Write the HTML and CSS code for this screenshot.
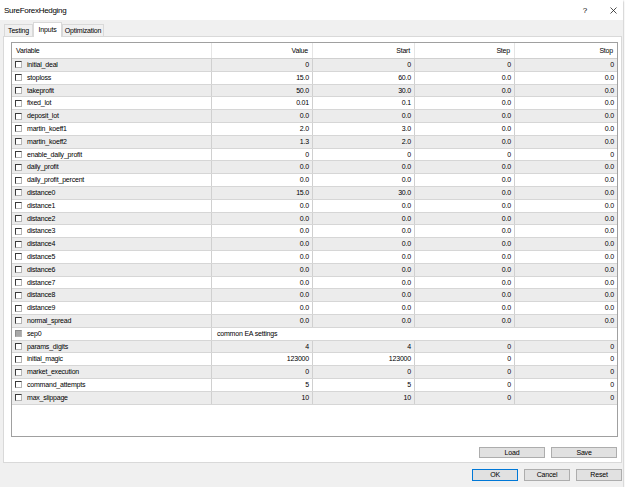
FILE: index.html
```html
<!DOCTYPE html>
<html>
<head>
    <meta charset="UTF-8">
    <title>SureForexHedging</title>
    <link rel="stylesheet" href="styles.css">
</head>
<body>
<div class="window">
    <div class="titlebar">
        <span class="title">SureForexHedging</span>
        <span class="help">?</span>
        <svg class="close" width="7" height="7" viewBox="0 0 7 7"><path d="M0.5 0.5 L6.5 6.5 M6.5 0.5 L0.5 6.5" stroke="#222" stroke-width="0.8" fill="none"/></svg>
    </div>

    <div class="tabs">
        <div class="tab tab-testing">Testing</div>
        <div class="tab tab-inputs active">Inputs</div>
        <div class="tab tab-opt">Optimization</div>
    </div>

    <div class="panel">
        <div class="list">
            <div class="head">
                <div class="var">Variable</div>
                <div>Value</div>
                <div>Start</div>
                <div>Step</div>
                <div>Stop</div>
            </div>
            <div class="rows">
                <div class="row"><div class="var"><span class="check"></span>initial_deal</div><div>0</div><div>0</div><div>0</div><div>0</div></div>
                <div class="row"><div class="var"><span class="check"></span>stoploss</div><div>15.0</div><div>60.0</div><div>0.0</div><div>0.0</div></div>
                <div class="row"><div class="var"><span class="check"></span>takeprofit</div><div>50.0</div><div>30.0</div><div>0.0</div><div>0.0</div></div>
                <div class="row"><div class="var"><span class="check"></span>fixed_lot</div><div>0.01</div><div>0.1</div><div>0.0</div><div>0.0</div></div>
                <div class="row"><div class="var"><span class="check"></span>deposit_lot</div><div>0.0</div><div>0.0</div><div>0.0</div><div>0.0</div></div>
                <div class="row"><div class="var"><span class="check"></span>martin_koeff1</div><div>2.0</div><div>3.0</div><div>0.0</div><div>0.0</div></div>
                <div class="row"><div class="var"><span class="check"></span>martin_koeff2</div><div>1.3</div><div>2.0</div><div>0.0</div><div>0.0</div></div>
                <div class="row"><div class="var"><span class="check"></span>enable_daily_profit</div><div>0</div><div>0</div><div>0</div><div>0</div></div>
                <div class="row"><div class="var"><span class="check"></span>daily_profit</div><div>0.0</div><div>0.0</div><div>0.0</div><div>0.0</div></div>
                <div class="row"><div class="var"><span class="check"></span>daily_profit_percent</div><div>0.0</div><div>0.0</div><div>0.0</div><div>0.0</div></div>
                <div class="row"><div class="var"><span class="check"></span>distance0</div><div>15.0</div><div>30.0</div><div>0.0</div><div>0.0</div></div>
                <div class="row"><div class="var"><span class="check"></span>distance1</div><div>0.0</div><div>0.0</div><div>0.0</div><div>0.0</div></div>
                <div class="row"><div class="var"><span class="check"></span>distance2</div><div>0.0</div><div>0.0</div><div>0.0</div><div>0.0</div></div>
                <div class="row"><div class="var"><span class="check"></span>distance3</div><div>0.0</div><div>0.0</div><div>0.0</div><div>0.0</div></div>
                <div class="row"><div class="var"><span class="check"></span>distance4</div><div>0.0</div><div>0.0</div><div>0.0</div><div>0.0</div></div>
                <div class="row"><div class="var"><span class="check"></span>distance5</div><div>0.0</div><div>0.0</div><div>0.0</div><div>0.0</div></div>
                <div class="row"><div class="var"><span class="check"></span>distance6</div><div>0.0</div><div>0.0</div><div>0.0</div><div>0.0</div></div>
                <div class="row"><div class="var"><span class="check"></span>distance7</div><div>0.0</div><div>0.0</div><div>0.0</div><div>0.0</div></div>
                <div class="row"><div class="var"><span class="check"></span>distance8</div><div>0.0</div><div>0.0</div><div>0.0</div><div>0.0</div></div>
                <div class="row"><div class="var"><span class="check"></span>distance9</div><div>0.0</div><div>0.0</div><div>0.0</div><div>0.0</div></div>
                <div class="row"><div class="var"><span class="check"></span>normal_spread</div><div>0.0</div><div>0.0</div><div>0.0</div><div>0.0</div></div>
                <div class="row"><div class="var"><span class="check grey"></span>sep0</div><div class="note">common EA settings</div></div>
                <div class="row"><div class="var"><span class="check"></span>params_digits</div><div>4</div><div>4</div><div>0</div><div>0</div></div>
                <div class="row"><div class="var"><span class="check"></span>initial_magic</div><div>123000</div><div>123000</div><div>0</div><div>0</div></div>
                <div class="row"><div class="var"><span class="check"></span>market_execution</div><div>0</div><div>0</div><div>0</div><div>0</div></div>
                <div class="row"><div class="var"><span class="check"></span>command_attempts</div><div>5</div><div>5</div><div>0</div><div>0</div></div>
                <div class="row"><div class="var"><span class="check"></span>max_slippage</div><div>10</div><div>10</div><div>0</div><div>0</div></div>
            </div>
        </div>
        <div class="actions">
            <div class="btn">Load</div>
            <div class="btn">Save</div>
        </div>
    </div>

    <div class="footer">
        <div class="btn small default">OK</div>
        <div class="btn small">Cancel</div>
        <div class="btn small">Reset</div>
    </div>
</div>
</body>
</html>
```

FILE: styles.css
```css
body {
    margin: 0;
    background-color: #fff;
    font-family: "Liberation Sans", Arial, sans-serif;
    font-size: 7px;
    letter-spacing: -0.2px;
    color: #000;
}

.window {
    width: 623px;
    height: 487px;
    background-color: #f0f0f0;
    box-shadow: 0 1px 2px rgba(0, 0, 0, 0.45);
    display: flex;
    flex-direction: column;
}

.titlebar {
    height: 20px;
    background-color: #fff;
    display: flex;
    align-items: center;
    padding: 0 6px 0 4px;
    font-size: 8px;
    letter-spacing: -0.3px;
}

.title {
    flex: 1;
}

.help {
    margin-right: 23px;
    font-size: 8px;
}

/* tabs */
.tabs {
    display: flex;
    align-items: flex-end;
    height: 16px;
    padding-left: 4px;
}

.tab {
    height: 12px;
    box-sizing: border-box;
    border: 1px solid #d9d9d9;
    border-bottom: none;
    background-color: #f0f0f0;
    text-align: center;
    line-height: 11px;
}

.tab-testing { width: 29px; }
.tab-inputs { width: 29px; }
.tab-opt { width: 42px; }

.tab.active {
    height: 15px;
    line-height: 13px;
    background-color: #fff;
    margin-bottom: -1px;
    position: relative;
    z-index: 1;
}

.panel {
    margin-left: 3px;
    width: 619px;
    height: 427px;
    box-sizing: border-box;
    border: 1px solid #d9d9d9;
    background-color: #fff;
    padding: 5px 3px 0 7px;
    display: flex;
    flex-direction: column;
}

/* list view */
.list {
    width: 607px;
    height: 395px;
    box-sizing: border-box;
    border: 1px solid #a0a0a0;
    background-color: #fff;
}

.head, .row {
    display: grid;
    grid-template-columns: 200px 101px 102px 100px 102px;
}

.head {
    height: 16px;
    box-sizing: border-box;
    border-bottom: 1px solid #d0d0d0;
}

.head > div {
    border-right: 1px solid #e5e5e5;
    padding: 0 4px;
    text-align: right;
    line-height: 15px;
}

.head > div:last-child,
.row > div:last-child {
    border-right: none;
}

.head .var {
    text-align: left;
}

.row {
    height: 12.8px;
    box-sizing: border-box;
    border-bottom: 1px solid #d6d6d6;
}

.row:nth-child(odd) {
    background-color: #ececec;
}

.row > div {
    border-right: 1px solid #d0d0d0;
    padding: 0 3px;
    text-align: right;
    line-height: 11.8px;
    white-space: nowrap;
    overflow: hidden;
}

.row .var {
    display: flex;
    align-items: center;
    gap: 5px;
    text-align: left;
}

.row .note {
    grid-column: 2 / span 4;
    text-align: left;
    padding-left: 5px;
}

.row:nth-child(22) {
    background-color: #fff;
}

.check {
    width: 7px;
    height: 7px;
    box-sizing: border-box;
    border: 1px solid;
    border-color: #3a3a3a #b4b4b4 #b4b4b4 #3a3a3a;
    background-color: #fff;
    flex: none;
}

.check.grey {
    background-color: #a8a8a8;
    border-color: #8a8a8a #b4b4b4 #b4b4b4 #8a8a8a;
}

/* buttons */
.actions {
    display: flex;
    justify-content: flex-end;
    gap: 6px;
    margin-top: 10px;
    padding-right: 1px;
}

.btn {
    width: 66px;
    height: 11px;
    box-sizing: border-box;
    border: 1px solid #adadad;
    background-color: #e1e1e1;
    text-align: center;
    line-height: 9px;
}

.footer {
    display: flex;
    justify-content: flex-end;
    gap: 6px;
    margin-top: 6px;
    padding-right: 1px;
}

.btn.small {
    width: 46px;
    height: 12px;
    line-height: 10px;
}

.btn.default {
    border-color: #0078d7;
}
```
